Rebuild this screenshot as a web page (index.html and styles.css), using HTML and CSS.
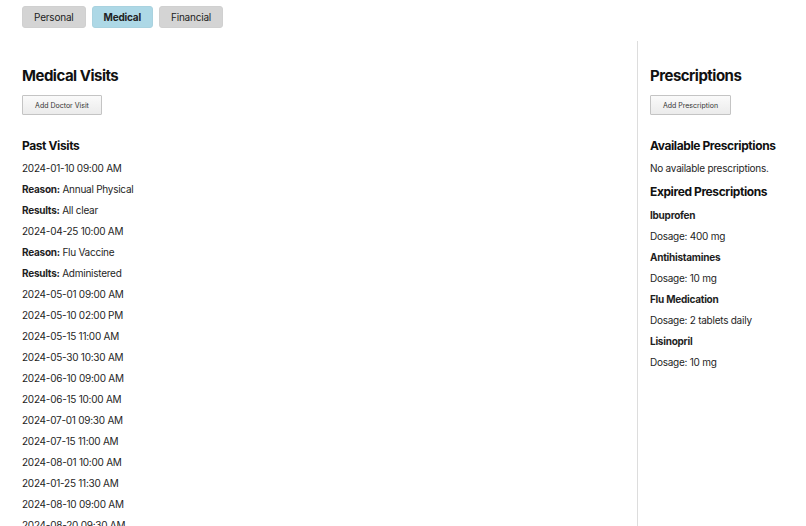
FILE: index.html
```html
<!DOCTYPE html>
<html lang="en">
<head>
<meta charset="utf-8">
<title>Medical</title>
<link rel="stylesheet" href="styles.css">
</head>
<body>
<div class="page">
  <nav class="tabs">
    <button class="tab">Personal</button>
    <button class="tab active">Medical</button>
    <button class="tab">Financial</button>
  </nav>
  <div class="layout">
    <main class="main">
      <h2 class="title">Medical Visits</h2>
      <button class="btn">Add Doctor Visit</button>
      <h3 class="subtitle">Past Visits</h3>
      <div class="list">
        <p>2024-01-10 09:00 AM</p>
        <p><strong>Reason:</strong> Annual Physical</p>
        <p><strong>Results:</strong> All clear</p>
        <p>2024-04-25 10:00 AM</p>
        <p><strong>Reason:</strong> Flu Vaccine</p>
        <p><strong>Results:</strong> Administered</p>
        <p>2024-05-01 09:00 AM</p>
        <p>2024-05-10 02:00 PM</p>
        <p>2024-05-15 11:00 AM</p>
        <p>2024-05-30 10:30 AM</p>
        <p>2024-06-10 09:00 AM</p>
        <p>2024-06-15 10:00 AM</p>
        <p>2024-07-01 09:30 AM</p>
        <p>2024-07-15 11:00 AM</p>
        <p>2024-08-01 10:00 AM</p>
        <p>2024-01-25 11:30 AM</p>
        <p>2024-08-10 09:00 AM</p>
        <p>2024-08-20 09:30 AM</p>
      </div>
    </main>
    <aside class="side">
      <h2 class="title">Prescriptions</h2>
      <button class="btn">Add Prescription</button>
      <h3 class="subtitle">Available Prescriptions</h3>
      <div class="list">
        <p>No available prescriptions.</p>
      </div>
      <h3 class="subtitle expired">Expired Prescriptions</h3>
      <div class="list expired-list">
        <p class="drug">Ibuprofen</p>
        <p>Dosage: 400 mg</p>
        <p class="drug">Antihistamines</p>
        <p>Dosage: 10 mg</p>
        <p class="drug">Flu Medication</p>
        <p>Dosage: 2 tablets daily</p>
        <p class="drug">Lisinopril</p>
        <p>Dosage: 10 mg</p>
      </div>
    </aside>
  </div>
</div>
</body>
</html>
```

FILE: styles.css
```css
html, body {
  margin: 0;
  padding: 0;
  background: #ffffff;
}
body {
  font-family: Inter, "Noto Sans", "Liberation Sans", sans-serif;
  color: #1a1a1a;
  height: 526px;
  overflow: hidden;
}
.page {
  padding: 6px 0 0 22px;
}
.tabs {
  display: flex;
  gap: 6px;
}
.tab {
  font-family: inherit;
  font-size: 10px;
  letter-spacing: -0.2px;
  color: #222;
  height: 22px;
  padding: 0 11px;
  border: 1px solid #d0d0d0;
  border-radius: 3px;
  background: #d4d4d4;
  cursor: pointer;
}
.tab.active {
  background: #add8e6;
  border-color: #a9d2df;
  font-weight: 700;
}
.layout {
  display: flex;
  margin-top: 13px;
}
.main {
  flex: 1;
  padding-top: 23px;
}
.side {
  width: 156px;
  border-left: 1px solid #dddddd;
  padding-left: 12px;
  padding-top: 23px;
  min-height: 500px;
}
.title {
  font-size: 15px;
  font-weight: 700;
  letter-spacing: -0.5px;
  margin: 0;
  line-height: 24px;
  color: #111;
}
.btn {
  display: block;
  font-family: inherit;
  font-size: 7px;
  color: #333;
  width: 80px;
  height: 20px;
  margin-top: 7px;
  padding: 0;
  border: 1px solid #c4c4c4;
  border-radius: 1px;
  background: linear-gradient(#fafafa, #ebebeb);
}
.side .btn {
  width: 81px;
}
.subtitle {
  font-size: 12px;
  font-weight: 700;
  letter-spacing: -0.4px;
  margin: 23px 0 0;
  line-height: 16px;
  color: #111;
}
.subtitle.expired {
  margin-top: 5px;
}
.list {
  padding-top: 4px;
}
.list.expired-list {
  padding-top: 5px;
}
.list p {
  margin: 0;
  font-size: 10px;
  letter-spacing: -0.25px;
  line-height: 21px;
  color: #1e1e1e;
}
.list p.drug {
  font-weight: 700;
}
```
